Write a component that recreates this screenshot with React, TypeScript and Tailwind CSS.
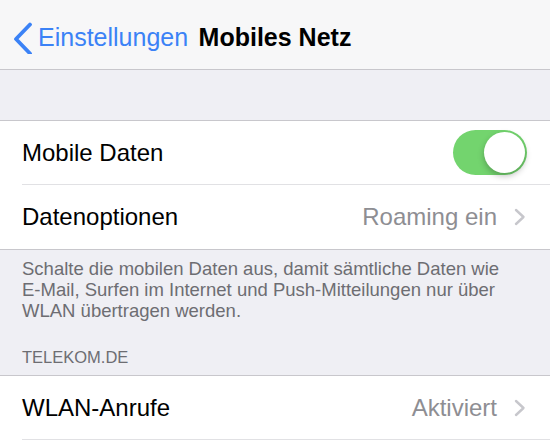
import { ReactNode } from "react";

function Chevron() {
  return (
    <svg width="12" height="18" viewBox="0 0 12 18" className="shrink-0">
      <path d="M2 2 L9.5 9 L2 16" fill="none" stroke="#c7c7cc" strokeWidth="2.4" strokeLinecap="round" strokeLinejoin="round" />
    </svg>
  );
}

function Row({ label, right, last }: { label: string; right: ReactNode; last?: boolean }) {
  return (
    <div className="flex h-[64px] items-stretch pl-[22px]">
      <div className={`flex flex-1 items-center justify-between pr-[24px] ${last ? "" : "border-b border-[#e1e1e4]"}`}>
        <span className="text-[24px] text-black">{label}</span>
        {right}
      </div>
    </div>
  );
}

function Value({ text }: { text: string }) {
  return (
    <span className="flex items-center gap-[17px]">
      <span className="text-[24px] text-[#8e8e93]">{text}</span>
      <Chevron />
    </span>
  );
}

export default function App() {
  return (
    <div className="h-[440px] w-[550px] overflow-hidden bg-[#efeff4] font-['Liberation_Sans',Arial,sans-serif]">
      <header className="grid h-[70px] grid-cols-[1fr_auto_1fr] items-center border-b border-[#c8c7cc] bg-[#f7f7f8] pt-[6px]">
        <div className="flex items-center pl-[12px]">
          <svg width="22" height="32" viewBox="0 0 22 32" className="shrink-0">
            <path d="M18 2.5 L4 17 L18 31.5" fill="none" stroke="#3b82f6" strokeWidth="3.8" strokeLinecap="round" strokeLinejoin="round" />
          </svg>
          <span className="ml-[4px] text-[25px] text-[#3b82f6]">Einstellungen</span>
        </div>
        <h1 className="text-[25px] font-bold text-black">Mobiles Netz</h1>
        <div />
      </header>

      <div className="h-[51px] border-b border-[#c8c7cc]" />

      <section className="bg-white">
        <Row
          label="Mobile Daten"
          right={
            <div className="-mr-[1px] flex h-[45px] w-[74px] items-center justify-end rounded-full bg-[#73d46e] p-[2px]">
              <div className="h-[41px] w-[41px] rounded-full bg-white shadow-[0_3px_6px_rgba(0,0,0,0.25)]" />
            </div>
          }
        />
        <Row label="Datenoptionen" right={<Value text="Roaming ein" />} last />
      </section>

      <div className="border-t border-[#c8c7cc] px-[22px] pt-[8px] pb-[8px] text-[#6d6d72]">
        <p className="text-[18.5px] leading-[21px] whitespace-nowrap">
          Schalte die mobilen Daten aus, damit sämtliche Daten wie
          <br />
          E-Mail, Surfen im Internet und Push-Mitteilungen nur über
          <br />
          WLAN übertragen werden.
        </p>
        <p className="mt-[26px] text-[16.5px] leading-[20px]">TELEKOM.DE</p>
      </div>

      <section className="border-t border-[#c8c7cc] bg-white">
        <Row label="WLAN-Anrufe" right={<Value text="Aktiviert" />} />
      </section>
    </div>
  );
}
